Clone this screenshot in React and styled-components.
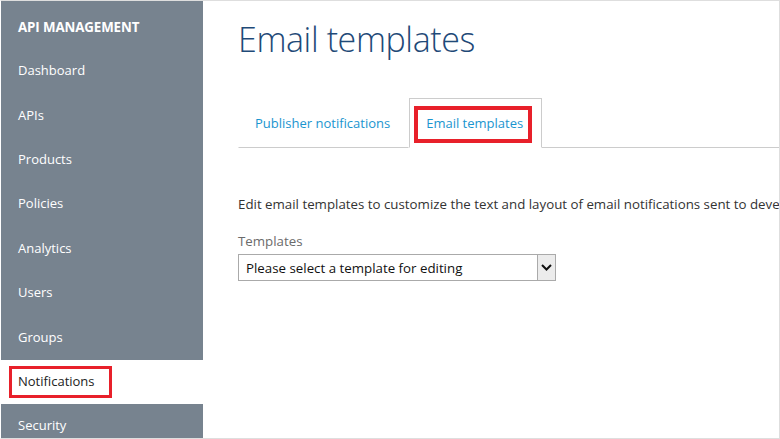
import React from "react";
import styled, { createGlobalStyle } from "styled-components";

const GlobalStyle = createGlobalStyle`
  html, body {
    margin: 0;
    padding: 0;
    background: #ffffff;
  }
  body {
    font-family: "Segoe UI", "Open Sans", "Noto Sans", sans-serif;
  }
`;

const navItems = [
  "Dashboard",
  "APIs",
  "Products",
  "Policies",
  "Analytics",
  "Users",
  "Groups",
  "Notifications",
  "Security",
];

const App = () => {
  return (
    <>
      <GlobalStyle />
      <Frame>
        <Sidebar>
          <Brand>API MANAGEMENT</Brand>
          {navItems.map((item) => (
            <NavItem key={item} active={item === "Notifications"}>
              <NavLabel highlight={item === "Notifications"}>{item}</NavLabel>
            </NavItem>
          ))}
        </Sidebar>
        <Main>
          <Title>Email templates</Title>
          <Tabs>
            <Tab>
              <TabLabel>Publisher notifications</TabLabel>
            </Tab>
            <Tab active>
              <TabLabel highlight>Email templates</TabLabel>
            </Tab>
            <TabFill />
          </Tabs>
          <Description>
            Edit email templates to customize the text and layout of email
            notifications sent to developers.
          </Description>
          <Label>Templates</Label>
          <Select>
            <SelectText>Please select a template for editing</SelectText>
            <SelectArrow>
              <svg width="11" height="7" viewBox="0 0 11 7">
                <path
                  d="M1 1 L5.5 5.5 L10 1"
                  fill="none"
                  stroke="#111"
                  strokeWidth="2"
                />
              </svg>
            </SelectArrow>
          </Select>
        </Main>
      </Frame>
    </>
  );
};

export default App;

const Frame = styled.div`
  width: 780px;
  height: 439px;
  box-sizing: border-box;
  border: 1px solid #dedede;
  border-left-color: #ffffff;
  display: flex;
  overflow: hidden;
`;

const Sidebar = styled.div`
  width: 202px;
  flex-shrink: 0;
  background-color: #77838f;
  display: flex;
  flex-direction: column;
  overflow: hidden;
`;

const Brand = styled.div`
  height: 48px;
  flex-shrink: 0;
  display: flex;
  align-items: center;
  padding-left: 17px;
  padding-top: 4px;
  box-sizing: border-box;
  color: #ffffff;
  font-size: 13.3px;
  font-weight: 700;
  letter-spacing: -0.1px;
`;

const NavItem = styled.div`
  height: 44.4px;
  flex-shrink: 0;
  display: flex;
  align-items: center;
  padding-left: 8px;
  background-color: ${(p) => (p.active ? "#ffffff" : "transparent")};
  color: ${(p) => (p.active ? "#222222" : "#ffffff")};
  font-size: 13px;
`;

const NavLabel = styled.span`
  display: inline-flex;
  align-items: center;
  height: 32px;
  box-sizing: border-box;
  padding: 0 14px 2px 6px;
  border: 3px solid ${(p) => (p.highlight ? "#e8202a" : "transparent")};
`;

const Main = styled.div`
  flex: 1;
  padding-left: 35px;
  display: flex;
  flex-direction: column;
  align-items: flex-start;
`;

const Title = styled.h1`
  margin: 15px 0 0 0;
  font-size: 34px;
  font-weight: 300;
  color: #1f4a78;
  letter-spacing: -0.4px;
  line-height: 46px;
`;

const Tabs = styled.div`
  margin-top: 36px;
  align-self: stretch;
  display: flex;
  align-items: flex-end;
`;

const Tab = styled.div`
  height: 50px;
  box-sizing: border-box;
  padding: 0 9px 0 4px;
  display: flex;
  align-items: center;
  border: 1px solid ${(p) => (p.active ? "#cccccc" : "transparent")};
  border-bottom: 1px solid ${(p) => (p.active ? "#ffffff" : "#cccccc")};
`;

const TabFill = styled.div`
  flex: 1;
  border-bottom: 1px solid #cccccc;
`;

const TabLabel = styled.span`
  display: inline-flex;
  align-items: center;
  height: 37px;
  box-sizing: border-box;
  padding: 0 5px 2px 8px;
  border: 4px solid ${(p) => (p.highlight ? "#e8202a" : "transparent")};
  color: #1b95cf;
  font-size: 13px;
  margin-top: 2px;
`;

const Description = styled.p`
  margin: 47px 0 0 0;
  font-size: 13.3px;
  color: #333333;
  white-space: nowrap;
`;

const Label = styled.div`
  margin-top: 19px;
  font-size: 13.3px;
  color: #6b6b6b;
`;

const Select = styled.div`
  margin-top: 4px;
  width: 318px;
  height: 27px;
  box-sizing: border-box;
  border: 1px solid #aaaaaa;
  display: flex;
  align-items: stretch;
`;

const SelectText = styled.div`
  flex: 1;
  padding-left: 7px;
  display: flex;
  align-items: center;
  font-size: 13.3px;
  color: #111111;
`;

const SelectArrow = styled.div`
  width: 17px;
  background: #ececec;
  border-left: 1px solid #aaaaaa;
  display: flex;
  align-items: center;
  justify-content: center;
`;
